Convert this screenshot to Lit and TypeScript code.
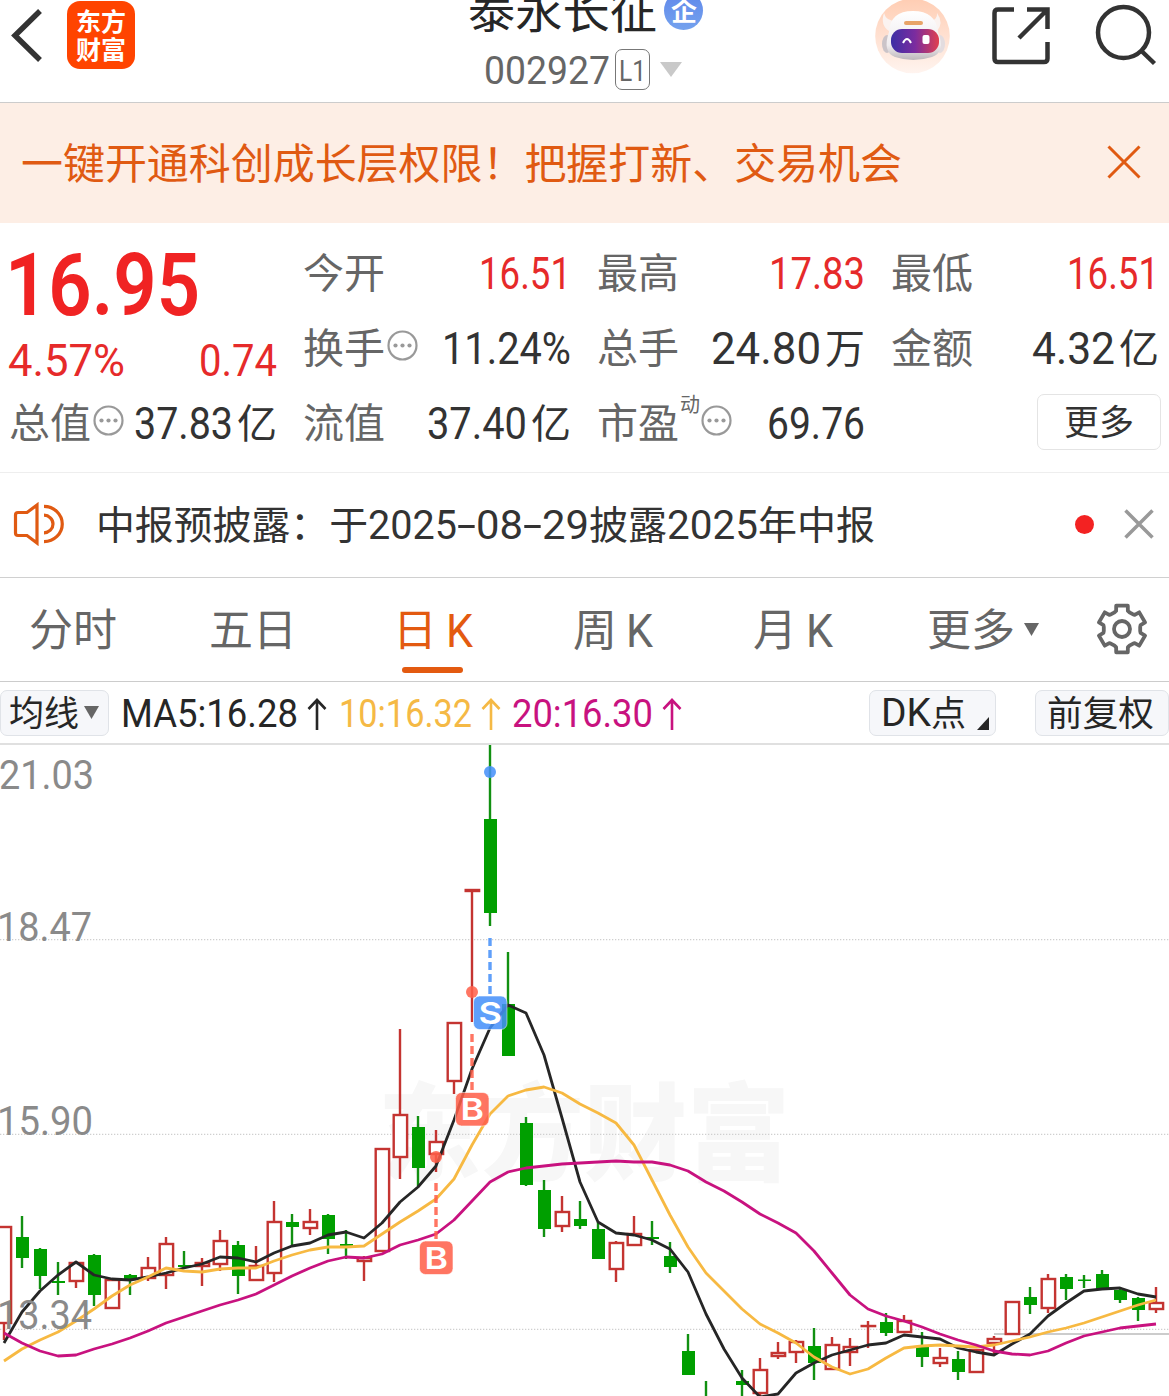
import { LitElement, html, svg, css } from "lit";
import { customElement, property } from "lit/decorators.js";

/** A run of text set to an exact advance width; the bottom of its box is the baseline. */
const fit = (text: string, width: number, size: number, cls = "") => html`
  <svg class="fit ${cls}" width=${width} height=${Math.round(size * 0.71)}>
    <text x="0" y=${Math.round(size * 0.71)} font-size=${size} textLength=${width} lengthAdjust="spacingAndGlyphs">${text}</text>
  </svg>`;

const fitStyles = css`
  .fit { display: block; flex: none; overflow: visible; fill: currentColor; }
`;

type Candle = [up: number, high: number, top: number, bottom: number, low: number];

// One entry for each trading day, 18px apart; values are vertical chart coordinates.
const CANDLES: (Candle | null)[] = [
  [1, 1227, 1227, 1323, 1340], [0, 1216, 1237, 1258, 1268], [0, 1248, 1249, 1276, 1289],
  [0, 1262, 1281, 1283, 1295], [1, 1262, 1263, 1281, 1288], [0, 1254, 1255, 1295, 1306],
  [1, 1280, 1280, 1308, 1308], [0, 1274, 1275, 1280, 1295], [1, 1257, 1268, 1278, 1281],
  [1, 1237, 1244, 1275, 1289], [0, 1251, 1265, 1267, 1268], [1, 1258, 1263, 1266, 1286],
  [1, 1230, 1241, 1264, 1271], [0, 1241, 1245, 1276, 1294], [1, 1246, 1266, 1280, 1280],
  [1, 1201, 1222, 1273, 1282], [0, 1214, 1222, 1227, 1246], [1, 1209, 1222, 1228, 1235],
  [0, 1214, 1215, 1239, 1254], [0, 1230, 1244, 1246, 1259], [1, 1256, 1258, 1261, 1281],
  [1, 1149, 1149, 1251, 1251], [1, 1029, 1115, 1157, 1179], [0, 1116, 1127, 1168, 1186],
  [1, 1130, 1142, 1154, 1172], [1, 1023, 1023, 1081, 1094], [1, 890, 890, 891, 1022],
  [0, 745, 819, 913, 926], [0, 952, 1004, 1056, 1056], [0, 1117, 1123, 1185, 1186],
  [0, 1180, 1190, 1229, 1237], [1, 1196, 1212, 1226, 1232], [0, 1201, 1219, 1226, 1229],
  [0, 1222, 1229, 1259, 1259], [1, 1241, 1243, 1269, 1282], [1, 1216, 1234, 1245, 1245],
  [0, 1221, 1237, 1239, 1245], [0, 1242, 1256, 1267, 1273], [0, 1334, 1351, 1375, 1375],
  [0, 1381, 1402, 1420, 1420], null, [0, 1370, 1381, 1385, 1396],
  [1, 1358, 1370, 1393, 1396], [1, 1342, 1353, 1356, 1359], [1, 1340, 1342, 1352, 1363],
  [0, 1328, 1346, 1363, 1380], [1, 1337, 1345, 1369, 1369], [1, 1338, 1347, 1352, 1366],
  [1, 1321, 1326, 1326, 1348], [0, 1313, 1322, 1333, 1336], [1, 1315, 1321, 1332, 1332],
  [0, 1332, 1346, 1357, 1367], [1, 1348, 1358, 1363, 1367], [0, 1351, 1359, 1372, 1380],
  [1, 1350, 1350, 1372, 1372], [1, 1336, 1339, 1343, 1355], [1, 1302, 1302, 1334, 1334],
  [0, 1287, 1297, 1305, 1314], [1, 1274, 1279, 1308, 1313], [0, 1274, 1277, 1289, 1300],
  [0, 1275, 1279.5, 1281, 1288], [0, 1270, 1274, 1289, 1290], [0, 1289, 1290, 1300, 1303],
  [0, 1297, 1298, 1310, 1321], [1, 1287, 1303, 1309, 1313],
];

const MA5 = [1343, 1312, 1291, 1275, 1262, 1275, 1279, 1280, 1277, 1273, 1268, 1264, 1257, 1258, 1262, 1253, 1246,
  1243, 1235, 1232, 1238, 1223, 1202, 1187, 1166, 1120, 1069, 1028, 1005, 1013, 1055, 1118, 1182, 1222, 1233, 1235,
  1240, 1249, 1272, 1314, 1349, 1378, 1397, 1394, 1373, 1363, 1355, 1350, 1345, 1343, 1335, 1337, 1339, 1348,
  1352, 1355, 1344, 1334, 1316, 1303, 1291, 1289, 1288, 1294, 1297];
const MA10 = [1361, 1349, 1340, 1332, 1321, 1309, 1296, 1285, 1277, 1268, 1271, 1272, 1269, 1268, 1268, 1261, 1255,
  1250, 1247, 1247, 1246, 1234, 1222, 1211, 1199, 1179, 1145, 1114, 1096, 1090, 1087, 1093, 1104, 1113, 1123, 1145,
  1180, 1215, 1247, 1273, 1291, 1309, 1324, 1333, 1343, 1357, 1367, 1374, 1369, 1358, 1348, 1346, 1345, 1346, 1347,
  1345, 1341, 1337, 1332, 1328, 1323, 1317, 1311, 1305, 1300];
const MA20 = [1333, 1343, 1351, 1356, 1355, 1349, 1344, 1338, 1331, 1323, 1317, 1311, 1305, 1300, 1294, 1285, 1276,
  1268, 1261, 1257, 1258, 1254, 1245, 1240, 1234, 1220, 1201, 1182, 1172, 1168, 1166, 1164, 1163, 1162, 1161, 1162,
  1162, 1165, 1171, 1182, 1191, 1202, 1214, 1223, 1233, 1251, 1273, 1295, 1309, 1316, 1321, 1327, 1334, 1340, 1345,
  1351, 1354, 1355, 1351, 1343, 1336, 1332, 1328, 1326, 1324];

const dayX = (i: number) => 4 + 18 * i;
const points = (ys: number[]) => ys.map((y, i) => `${dayX(i)},${y}`).join(" ");

@customElement("k-chart")
export class KChart extends LitElement {
  static styles = css`
    :host { display: block; height: 651px; overflow: hidden; }
    svg { display: block; font-family: Roboto, "Noto Sans CJK SC", sans-serif; }
    .up { fill: #fff; stroke: #c43431; stroke-width: 2.4; }
    .down { fill: #009f00; }
    .down-wick { stroke: #119011; stroke-width: 2.4; }
    .grid { stroke: #cfcfcf; stroke-width: 1.2; stroke-dasharray: 1.3 1.7; }
    .ma { fill: none; stroke-width: 2.8; stroke-linejoin: round; }
    .ma5 { stroke: #262626; }
    .ma10 { stroke: #f7b942; }
    .ma20 { stroke: #c8127f; }
    .mark { font-size: 30px; font-family: Inter, "Liberation Sans", sans-serif; font-weight: 600; fill: #fff; }
    .axis { fill: #8a8a8a; font-size: 41px; }
    .water { fill: #f7f7f7; font-size: 106px; font-weight: 900; font-family: "Noto Sans CJK SC", sans-serif; }
  `;

  private candle(c: Candle | null, i: number) {
    if (!c) return "";
    const [up, high, top, bottom, low] = c;
    const x = dayX(i);
    if (up) {
      return svg`<g class="up">
        <path d="M${x} ${high}V${top}M${x} ${bottom}V${low}"></path>
        <rect x=${x - 6.3} y=${top} width="13.4" height=${Math.max(bottom - top, 0.1)}></rect>
      </g>`;
    }
    return svg`<path class="down-wick" d="M${x} ${high}V${low}"></path>
      <rect class="down" x=${x - 6} y=${top} width="13" height=${bottom - top}></rect>`;
  }

  private marker(letter: string, x: number, dotY: number, dashY: number, boxY: number, color: string) {
    return svg`
      <g opacity="0.86">
        <path d="M${x} ${dashY}V${boxY - 1}" stroke=${color} stroke-width="3.4" stroke-dasharray="8 4"></path>
        <circle cx=${x} cy=${dotY} r="6" fill=${color}></circle>
        <rect x=${x - 16.5} y=${boxY} width="33.5" height="33.5" rx="6" fill=${color} stroke="#fff" stroke-opacity="0.6"></rect>
      </g>
      <text class="mark" x=${x - 11.5} y=${boxY + 27.5} textLength="23.5" lengthAdjust="spacingAndGlyphs">${letter}</text>`;
  }

  render() {
    return html`<svg width="1169" height="651" viewBox="0 745 1169 651">
      <text class="water" x="378" y="1172" textLength="412" lengthAdjust="spacingAndGlyphs">东方财富</text>
      ${[939.6, 1134.4, 1329.3].map((y) => svg`<path class="grid" d="M0 ${y}H1169"></path>`)}
      <path d="M994 1334H1169" stroke="#ccc" stroke-width="2"></path>
      ${CANDLES.map((c, i) => this.candle(c, i))}
      <polyline class="ma ma5" points=${points(MA5)}></polyline>
      <polyline class="ma ma10" points=${points(MA10)}></polyline>
      <polyline class="ma ma20" points=${points(MA20)}></polyline>
      ${this.marker("B", 436, 1157, 1183, 1241, "#ff5f49")}
      ${this.marker("B", 472, 992, 1034, 1092.5, "#ff5f49")}
      ${this.marker("S", 490, 772, 938, 996, "#4590fa")}
      <text class="axis" x="-1" y="788.5" textLength="95" lengthAdjust="spacingAndGlyphs">21.03</text>
      <text class="axis" x="-3" y="940.5" textLength="95" lengthAdjust="spacingAndGlyphs">18.47</text>
      <text class="axis" x="-3" y="1135" textLength="96" lengthAdjust="spacingAndGlyphs">15.90</text>
      <text class="axis" x="-3" y="1329" textLength="95" lengthAdjust="spacingAndGlyphs">13.34</text>
    </svg>`;
  }
}

@customElement("quote-cell")
export class QuoteCell extends LitElement {
  static styles = [fitStyles, css`
    :host { display: flex; align-items: flex-end; color: #333; }
    .label { color: #666; margin: 0 0 1.5px -1px; }
    .value { margin-left: auto; display: flex; align-items: flex-end; }
    .red { color: #e62a2a; }
    .unit { margin: 0 0 1px 4px; }
    .info { margin: 0 0 3px 2.5px; display: block; flex: none; }
    .sup { color: #666; margin: 0 -1px 27px 1px; }
  `];
  @property() label = "";
  @property() value = "";
  @property({ type: Number }) width = 90;
  @property() unit = "";
  @property() sup = "";
  @property({ type: Boolean }) info = false;
  @property({ type: Boolean }) red = false;

  render() {
    return html`
      ${fit(this.label, 82, 41, "label")}
      ${this.sup ? fit(this.sup, 20, 20, "sup") : ""}
      ${this.info ? html`<svg class="info" width="31" height="31" viewBox="-15.5 -15.5 31 31">
        <circle r="14" fill="none" stroke="#999" stroke-width="2.2"></circle>
        <g fill="#999"><circle cx="-7" r="2.1"></circle><circle r="2.1"></circle><circle cx="7" r="2.1"></circle></g>
      </svg>` : ""}
      <div class="value ${this.red ? "red" : ""}">
        ${fit(this.value, this.width, 43.5)}
        ${this.unit ? fit(this.unit, 40, 40, "unit") : ""}
      </div>`;
  }
}

@customElement("app-root")
export class AppRoot extends LitElement {
  static styles = [fitStyles, css`
    :host {
      display: block; width: 1169px; height: 1396px; overflow: hidden; background: #fff; color: #333;
      font-family: Roboto, "Noto Sans CJK SC", sans-serif;
    }
    * { box-sizing: border-box; }
    svg { display: block; flex: none; }
    .row { display: flex; align-items: flex-end; }
    .header { display: grid; grid-template-columns: 440px 1fr 440px; height: 103px; border-bottom: 1px solid #ccc; }
    .left { display: flex; padding: 1px 0 0 10px; }
    .logo { margin: 0 0 0 24px; width: 68px; height: 68px; border-radius: 13px; background: #ff4400; color: #fff;
      display: flex; flex-direction: column; align-items: center; gap: 10px; padding-top: 12px; font-weight: 700; }
    .title { display: flex; flex-direction: column; }
    .name { height: 28px; padding-left: 28px; color: #262626; }
    .badge { width: 39px; height: 39px; border-radius: 50%; margin: 0 0 -2px 7px; background: linear-gradient(#5f87ea, #74a2ee);
      color: #fff; display: flex; justify-content: center; align-items: center; padding-top: 2px; font-weight: 700; }
    .code { color: #666; align-items: center; padding-left: 44px; margin-top: 21px; height: 41px; }
    .code .fit { margin-top: 1px; }
    .level { border: 1.5px solid #777; border-radius: 7px; width: 35px; height: 41px; margin: 0 10px 0 5px;
      display: flex; align-items: center; justify-content: center; }
    .actions { display: flex; justify-content: flex-end; padding-right: 11px; }
    .share { margin: 5px 0 0 39px; }
    .search { margin: 3px 0 0 42px; }
    .banner { height: 120px; background: #fdeee5; color: #e05a12; padding: 0 28px 44px 21px; justify-content: space-between; }
    .quote { height: 250px; border-bottom: 1px solid #eee; padding-left: 9.5px; display: grid; column-gap: 27.2px;
      grid-template-columns: repeat(4, 267px); grid-template-rows: 66px 75px 75px; }
    .price { grid-row: span 2; display: flex; flex-direction: column; justify-content: flex-end; gap: 30px;
      margin: 0 0 -12px -2px; color: #f02323; }
    .last { font-weight: 600; margin-left: -3px; }
    .change { display: flex; justify-content: space-between; color: #e62a2a; }
    .more { justify-self: end; align-self: end; width: 124px; height: 56px; margin: 0 -2px -11px 0; border: 1.5px solid #e4e4e4;
      border-radius: 7px; display: flex; align-items: center; justify-content: center; }
    .notice { height: 105px; border-bottom: 1px solid #d0d0d0; padding: 0 15px 38px 12px; }
    .speaker { margin: 0 32px -7px 0; }
    .dot { width: 19px; height: 19px; border-radius: 50%; background: #f32222; margin: 0 30px 5px auto; }
    .tabs { height: 104px; border-bottom: 1px solid #ccc; display: grid; color: #666;
      grid-template-columns: repeat(5, 180px) 200px 1fr; margin-left: -17px; }
    .tab { display: flex; align-items: flex-end; justify-content: center; gap: 9px; padding-bottom: 34px; position: relative; }
    .tab .cn { margin-bottom: 1px; }
    .active { color: #e35a10; }
    .active::after { content: ""; position: absolute; bottom: 8px; left: 59px; width: 61px; height: 6px; border-radius: 3px; background: #e35a10; }
    .gear { margin: 23px 0 0 11px; }
    .bar { height: 63px; border-bottom: 2px solid #e0e0e0; display: flex; align-items: flex-start; padding-top: 8px; color: #262626; }
    .chip { height: 46px; background: #f6f7fa; border: 1.5px solid #e0e3e8; border-radius: 7px; display: flex; align-items: flex-end; padding-bottom: 9px; }
    .lines { width: 109px; padding-left: 8px; gap: 5px; }
    .lines .tri { margin-bottom: 7px; }
    .ma { display: flex; align-items: flex-end; height: 37px; }
    .arrow { margin: 0 12px -3px 9px; fill: none; stroke: currentColor; stroke-width: 2.6; }
    .m5 { margin-left: 12px; }
    .m10 { color: #f5b945; }
    .m20 { color: #c8127f; margin-left: -1px; }
    .dk { margin-left: auto; width: 127px; padding-left: 11px; }
    .dk .corner { margin: 0 0 -4px 11px; }
    .adj { margin-left: 39px; width: 134px; padding-left: 11px; }
  `];

  private arrow() {
    return html`<svg class="arrow" width="20" height="32" viewBox="0 0 20 32"><path d="M10 32V2M1.5 11L10 2L18.5 11"></path></svg>`;
  }

  private tri(w: number, h: number, color: string) {
    return html`<svg class="tri" width=${w} height=${h}><path fill=${color} d="M0 0H${w}L${w / 2} ${h}Z"></path></svg>`;
  }

  private robot() {
    return html`<svg width="76" height="76" viewBox="875 -1 76 76">
      <defs>
        <linearGradient id="halo" x2="0" y2="1"><stop offset="0" stop-color="#ffcdb3"></stop><stop offset="1" stop-color="#fff4ef"></stop></linearGradient>
        <linearGradient id="visor"><stop offset="0" stop-color="#3c2fa5"></stop><stop offset=".5" stop-color="#7b2c9f"></stop><stop offset="1" stop-color="#e0404f"></stop></linearGradient>
        <linearGradient id="helmet" x2="0" y2="1"><stop offset="0" stop-color="#ffffff"></stop><stop offset=".7" stop-color="#efecee"></stop><stop offset="1" stop-color="#bdb7bb"></stop></linearGradient>
      </defs>
      <circle cx="912.5" cy="35" r="37.3" fill="url(#halo)"></circle>
      <path d="M884 12Q880 24 889 30L896 20Q886 20 884 12ZM937 12Q944 22 937 30L929 20Q938 19 937 12Z" fill="#fbf3f0"></path>
      <ellipse cx="887" cy="43" rx="5" ry="9" fill="#cbc4c8"></ellipse>
      <ellipse cx="940" cy="43" rx="5" ry="9" fill="#e3dcdf"></ellipse>
      <path d="M889 31Q890 10 913 10Q936 10 938 31Q946 51 932 56Q913 62 895 56Q882 51 889 31Z" fill="url(#helmet)"></path>
      <rect x="904" y="20" width="19" height="4" rx="2" fill="#e8a468"></rect>
      <rect x="891" y="28" width="48" height="24" rx="11" fill="url(#visor)"></rect>
      <path d="M903 42Q907 34 911 42" fill="none" stroke="#fff" stroke-width="2"></path>
      <rect x="922.5" y="34" width="7" height="9" rx="2" fill="#fff"></rect>
    </svg>`;
  }

  private gear() {
    const outline: string[] = [];
    for (let k = 0; k < 6; k++) {
      for (const [r, a] of [[18.3, -24], [19, -18], [24, -14], [24, 14], [19, 18], [18.3, 24]] as const) {
        const t = ((k * 60 + a - 90) * Math.PI) / 180;
        outline.push(`${(r * Math.cos(t)).toFixed(2)},${(r * Math.sin(t)).toFixed(2)}`);
      }
    }
    return html`<svg class="gear" width="56" height="56" viewBox="-28 -28 56 56" fill="none" stroke="#666" stroke-width="3.8">
      <polygon points=${outline.join(" ")} stroke-linejoin="round"></polygon><circle r="8"></circle>
    </svg>`;
  }

  render() {
    return html`
      <header class="header">
        <div class="left">
          <svg width="33" height="68" viewBox="10 1 33 68"><path d="M40 11L15 35.5L40 60" fill="none" stroke="#333" stroke-width="5.5"></path></svg>
          <div class="logo">${fit("东方", 50, 25.5)}${fit("财富", 50, 25.5)}</div>
        </div>
        <div class="title">
          <div class="row name">${fit("泰永长征", 189, 47)}<div class="badge">${fit("企", 26, 26)}</div></div>
          <div class="row code">${fit("002927", 126, 38.5)}<div class="level">${fit("L1", 27, 30)}</div>${this.tri(22, 15, "#c9c9c9")}</div>
        </div>
        <div class="actions">
          ${this.robot()}
          <svg class="share" width="62" height="62" viewBox="990 5 62 62" fill="none" stroke="#333" stroke-width="4.5">
            <path d="M1014 9.5H998Q994.5 9.5 994.5 13V58.5Q994.5 62 998 62H1044Q1047.5 62 1047.5 58.5V42M1027 9.5H1047.5V29M1047 10L1019 38"></path>
          </svg>
          <svg class="search" width="64" height="64" viewBox="1093 3 64 64" fill="none" stroke="#333" stroke-width="4.5">
            <circle cx="1122.5" cy="32.5" r="25.5"></circle><path d="M1140.5 51L1153.5 63.5"></path>
          </svg>
        </div>
      </header>

      <section class="row banner">
        ${fit("一键开通科创成长层权限！把握打新、交易机会", 881, 42)}
        <svg width="34" height="34" viewBox="0 0 34 34" stroke="#e05a12" stroke-width="3"><path d="M1.5 1.5L32.5 32.5M32.5 1.5L1.5 32.5"></path></svg>
      </section>

      <section class="quote">
        <div class="price">
          ${fit("16.95", 195, 88, "last")}
          <div class="change">${fit("4.57%", 117, 43.5)}${fit("0.74", 78, 43.5)}</div>
        </div>
        <quote-cell label="今开" value="16.51" width="92" red></quote-cell>
        <quote-cell label="最高" value="17.83" width="96" red></quote-cell>
        <quote-cell label="最低" value="16.51" width="92" red></quote-cell>
        <quote-cell label="换手" value="11.24%" width="129" info></quote-cell>
        <quote-cell label="总手" value="24.80" width="110" unit="万"></quote-cell>
        <quote-cell label="金额" value="4.32" width="83" unit="亿"></quote-cell>
        <quote-cell label="总值" value="37.83" width="99" unit="亿" info></quote-cell>
        <quote-cell label="流值" value="37.40" width="100" unit="亿"></quote-cell>
        <quote-cell label="市盈" sup="动" value="69.76" width="98" info></quote-cell>
        <div class="more">${fit("更多", 70, 35)}</div>
      </section>

      <section class="row notice">
        <svg class="speaker" width="52" height="44" viewBox="12 502 52 44" fill="none" stroke="#e05a12" stroke-width="3.2">
          <path d="M37 505L27 512.5H18Q15.5 512.5 15.5 515V533Q15.5 535.5 18 535.5H27L37 543ZM44 506.4A18.3 17.6 0 0 1 44 541.6M44 515.2A9 8.8 0 0 1 44 532.8"></path>
        </svg>
        ${fit("中报预披露：于", 272, 39)}${fit("2025", 89, 40.5)}${fit("-", 19, 40.5)}${fit("08", 47, 40.5)}${fit("-", 19, 40.5)}${fit("29", 47, 40.5)}
        ${fit("披露", 78, 39)}${fit("2025", 91, 40.5)}${fit("年中报", 117, 39)}
        <span class="dot"></span>
        <svg width="30" height="30" viewBox="0 0 30 30" stroke="#999" stroke-width="3.5"><path d="M1.5 1.5L28.5 28.5M28.5 1.5L1.5 28.5"></path></svg>
      </section>

      <nav class="tabs">
        <div class="tab">${fit("分时", 88, 44, "cn")}</div>
        <div class="tab">${fit("五日", 88, 44, "cn")}</div>
        <div class="tab active">${fit("日", 44, 44, "cn")}${fit("K", 27, 46.5)}</div>
        <div class="tab">${fit("周", 44, 44, "cn")}${fit("K", 27, 46.5)}</div>
        <div class="tab">${fit("月", 44, 44, "cn")}${fit("K", 27, 46.5)}</div>
        <div class="tab">${fit("更多", 88, 44, "cn")}<svg width="15" height="24"><path fill="#666" d="M0 0H15L7.5 13Z"></path></svg></div>
        ${this.gear()}
      </nav>

      <section class="bar">
        <div class="chip lines">${fit("均线", 70, 35)}${this.tri(15, 13, "#666")}</div>
        <div class="ma m5">${fit("MA5:16.28", 177, 38)}${this.arrow()}</div>
        <div class="ma m10">${fit("10:16.32", 133, 38)}${this.arrow()}</div>
        <div class="ma m20">${fit("20:16.30", 141, 38)}${this.arrow()}</div>
        <div class="chip dk">${fit("DK", 50, 38)}${fit("点", 35, 35)}<svg class="corner" width="12" height="13"><path d="M12 0V13H0Z" fill="#262626"></path></svg></div>
        <div class="chip adj">${fit("前复权", 107, 35)}</div>
      </section>

      <k-chart></k-chart>`;
  }
}
